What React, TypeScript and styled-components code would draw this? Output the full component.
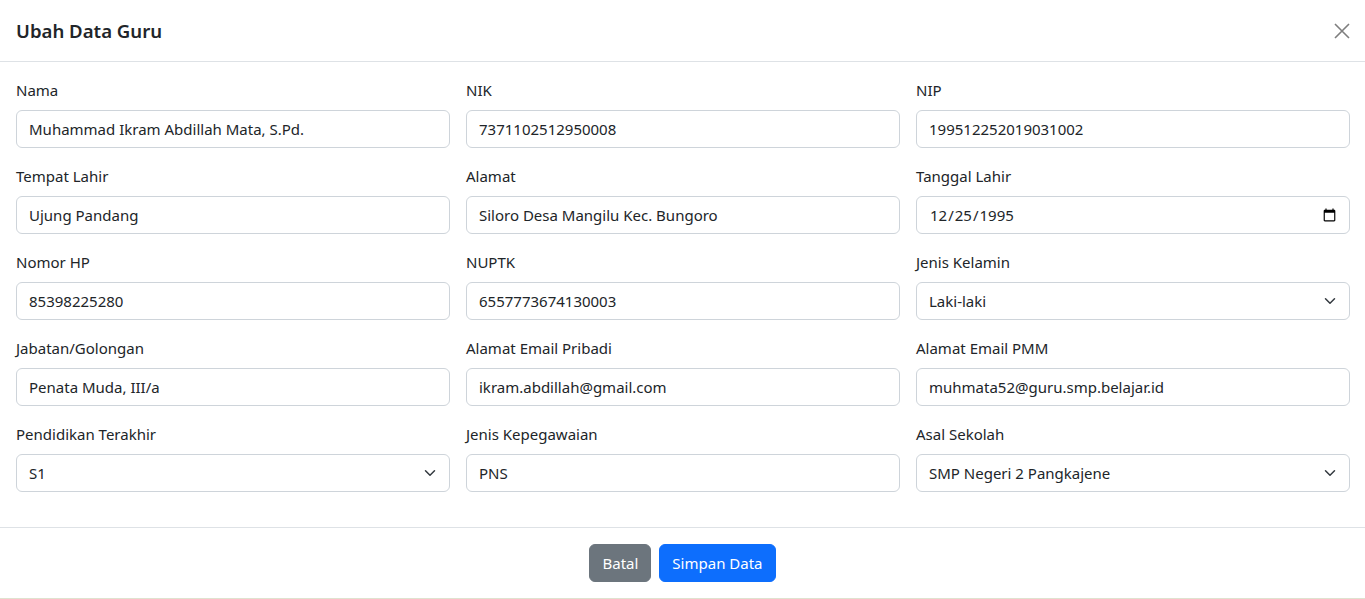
import styled, { createGlobalStyle } from "styled-components";

const GlobalStyle = createGlobalStyle`
    * { box-sizing: border-box; }
    html, body { margin: 0; padding: 0; background: #fff; }
    body {
        font-family: "Segoe UI", "Noto Sans", sans-serif;
        color: #212529;
        font-size: 15px;
        line-height: 24px;
    }
`;

type Field = {
    label: string;
    value: string;
    kind?: "text" | "date" | "select";
};

const FIELDS: Field[] = [
    { label: "Nama", value: "Muhammad Ikram Abdillah Mata, S.Pd." },
    { label: "NIK", value: "7371102512950008" },
    { label: "NIP", value: "199512252019031002" },
    { label: "Tempat Lahir", value: "Ujung Pandang" },
    { label: "Alamat", value: "Siloro Desa Mangilu Kec. Bungoro" },
    { label: "Tanggal Lahir", value: "1995-12-25", kind: "date" },
    { label: "Nomor HP", value: "85398225280" },
    { label: "NUPTK", value: "6557773674130003" },
    { label: "Jenis Kelamin", value: "Laki-laki", kind: "select" },
    { label: "Jabatan/Golongan", value: "Penata Muda, III/a" },
    { label: "Alamat Email Pribadi", value: "ikram.abdillah@gmail.com" },
    { label: "Alamat Email PMM", value: "muhmata52@guru.smp.belajar.id" },
    { label: "Pendidikan Terakhir", value: "S1", kind: "select" },
    { label: "Jenis Kepegawaian", value: "PNS" },
    { label: "Asal Sekolah", value: "SMP Negeri 2 Pangkajene", kind: "select" },
];

const Modal = styled.div`
    width: 100%;
    height: 599px;
    display: flex;
    flex-direction: column;
    background: #fff;
    border-bottom: 1px solid #dfe2cf;
`;

const Header = styled.div`
    height: 62px;
    display: flex;
    align-items: center;
    justify-content: space-between;
    padding: 0 15px 0 16px;
    border-bottom: 1px solid #dee2e6;
`;

const Title = styled.h5`
    margin: 0;
    font-size: 18.6px;
    font-weight: 600;
    line-height: 30px;
`;

const CloseBtn = styled.button`
    width: 16px;
    height: 16px;
    padding: 0;
    border: 0;
    background: transparent;
    opacity: 0.5;
    display: flex;
    cursor: pointer;
`;

const Body = styled.div`
    padding: 16px 15px 35px 16px;
    display: grid;
    grid-template-columns: repeat(3, 1fr);
    column-gap: 16px;
    row-gap: 16px;
`;

const Group = styled.div`
    display: flex;
    flex-direction: column;
    min-width: 0;
`;

const Label = styled.label`
    line-height: 24px;
    margin-bottom: 8px;
`;

const Control = styled.input`
    width: 100%;
    height: 38px;
    padding: 6px 12px;
    font: inherit;
    color: #212529;
    background: #fff;
    border: 1px solid #ced4da;
    border-radius: 6px;
    outline: none;

    &::-webkit-calendar-picker-indicator {
        margin-right: -2px;
    }
`;

const SelectWrap = styled.div`
    position: relative;
`;

const Select = styled.select`
    width: 100%;
    height: 38px;
    padding: 6px 36px 6px 12px;
    font: inherit;
    color: #212529;
    background: #fff;
    border: 1px solid #ced4da;
    border-radius: 6px;
    appearance: none;
    outline: none;
`;

const Chevron = styled.svg`
    position: absolute;
    right: 12px;
    top: 13px;
    width: 16px;
    height: 12px;
    pointer-events: none;
`;

const Footer = styled.div`
    flex: 1;
    display: flex;
    justify-content: center;
    align-items: center;
    gap: 8px;
    border-top: 1px solid #dee2e6;
`;

const Button = styled.button<{ $variant: "secondary" | "primary" }>`
    height: 38px;
    padding: 6px 12px;
    font: inherit;
    color: #fff;
    border: 1px solid ${p => p.$variant === "primary" ? "#0d6efd" : "#6c757d"};
    background: ${p => p.$variant === "primary" ? "#0d6efd" : "#6c757d"};
    border-radius: 6px;
    cursor: pointer;
`;

const FormField = ({ field }: { field: Field }) => (
    <Group>
        <Label>{field.label}</Label>
        {field.kind === "select" ? (
            <SelectWrap>
                <Select defaultValue={field.value}>
                    <option value={field.value}>{field.value}</option>
                </Select>
                <Chevron viewBox="0 0 16 16" preserveAspectRatio="xMidYMid meet">
                    <path d="m2 5 6 6 6-6" fill="none" stroke="#343a40" strokeWidth="2" strokeLinecap="round" strokeLinejoin="round" />
                </Chevron>
            </SelectWrap>
        ) : (
            <Control type={field.kind === "date" ? "date" : "text"} defaultValue={field.value} />
        )}
    </Group>
);

const App = () => {
    return (
        <>
            <GlobalStyle />
            <Modal>
                <Header>
                    <Title>Ubah Data Guru</Title>
                    <CloseBtn aria-label="Close">
                        <svg width="16" height="16" viewBox="0 0 16 16">
                            <path d="M1 1 15 15M15 1 1 15" stroke="#000" strokeWidth="1.6" />
                        </svg>
                    </CloseBtn>
                </Header>

                <Body>
                    {FIELDS.map(f => <FormField key={f.label} field={f} />)}
                </Body>

                <Footer>
                    <Button $variant="secondary">Batal</Button>
                    <Button $variant="primary">Simpan Data</Button>
                </Footer>
            </Modal>
        </>
    );
};

export default App;
